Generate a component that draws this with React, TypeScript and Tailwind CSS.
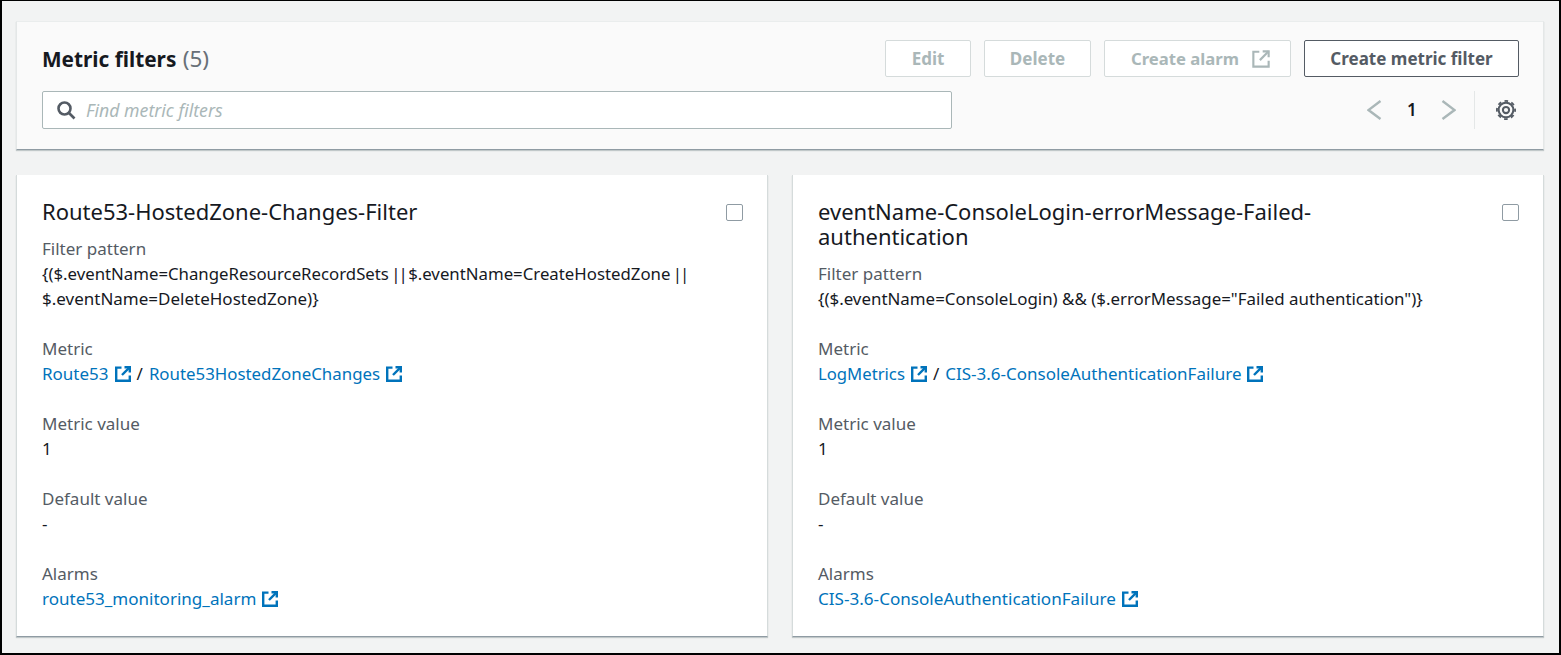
const font = "[font-family:'Noto_Sans','Open_Sans',sans-serif]";

function ExtIcon({ color = "#0073bb", size = 16, sw = 2.4 }: { color?: string; size?: number; sw?: number }) {
  return (
    <svg width={size} height={size} viewBox="0 0 16 16" fill="none" stroke={color} strokeWidth={sw} className="shrink-0">
      <path d="M6.5 1.6H1.2v13.2h13.6V9.5" />
      <path d="M9.5 1.2h5.3v5.3" />
      <path d="M14.8 1.2 7 9" />
    </svg>
  );
}

function Link({ text, cls = "" }: { text: string; cls?: string }) {
  return (
    <span className={`inline-flex items-center gap-[6px] text-[#0073bb] whitespace-nowrap ${cls}`}>
      {text}
      <ExtIcon />
    </span>
  );
}

function Field({ label, children }: { label: string; children: React.ReactNode }) {
  return (
    <div>
      <div className="text-[#545b64]">{label}</div>
      <div className="text-[#16191f]">{children}</div>
    </div>
  );
}

function Card({ title, pattern, metric, alarm }: { title: React.ReactNode; pattern: React.ReactNode; metric: React.ReactNode; alarm: React.ReactNode }) {
  return (
    <div className="bg-white flex-1 min-w-0 pt-[24px] pb-[25px] pl-[25px] pr-[24px] border-b border-b-[#8f9ba3] border-x border-x-[#d5dbdb] shadow-[0_1px_1px_rgba(0,28,36,0.2)]">
      <div className="flex justify-between items-start">
        <div className="text-[22px] text-[#16191f] leading-[25px]">{title}</div>
        <div className="w-[17px] h-[17px] mt-[5px] border border-[#8f9ba3] rounded-[2px] bg-white shrink-0"></div>
      </div>
      <div className="mt-[12px]">
        <Field label="Filter pattern"><span className="text-[16.9px]">{pattern}</span></Field>
        <div className="mt-[25px] flex flex-col gap-[25px]">
          <Field label="Metric">
            <span className="flex items-center">{metric}</span>
          </Field>
          <Field label="Metric value">1</Field>
          <Field label="Default value">-</Field>
          <Field label="Alarms">{alarm}</Field>
        </div>
      </div>
    </div>
  );
}

function Btn({ children, w }: { children: React.ReactNode; w: string }) {
  return (
    <div className={`${w} h-[37px] border border-[#d5dbdb] rounded-[2px] bg-white text-[#aab7b8] font-bold flex items-center justify-center`}>
      {children}
    </div>
  );
}

export default function App() {
  return (
    <div className={`${font} w-[1561px] h-[655px] bg-[#f2f3f3] border-2 border-black border-t-[1px] text-[17px] leading-[25px] px-[14px] pt-[20px] overflow-hidden`}>
      <div className="bg-[#fafafa] h-[129px] w-[1528px] border-x border-[#e4e7e7] border-t border-t-[#eaeded] border-b border-b-[#8f9ba3] shadow-[0_1px_1px_rgba(0,28,36,0.2)] pl-[25px] pr-[24px] pt-[18px]">
        <div className="flex justify-between items-center h-[37px]">
          <div className="text-[20.8px] font-bold text-[#16191f]">
            Metric filters <span className="ml-[1px] font-normal text-[22.5px] text-[#687078]">(5)</span>
          </div>
          <div className="flex gap-[13px]">
            <Btn w="w-[86px]">Edit</Btn>
            <Btn w="w-[107px]">Delete</Btn>
            <div className="w-[187px] h-[37px] border border-[#d5dbdb] rounded-[2px] bg-white text-[#aab7b8] text-[16.7px] font-bold flex items-center justify-end gap-[13px] pr-[20px]">
              Create alarm <ExtIcon color="#aab7b8" size={18} sw={1.9} />
            </div>
            <div className="w-[215px] h-[37px] border border-[#545b64] rounded-[2px] bg-white text-[#545b64] font-bold flex items-center justify-center">Create metric filter</div>
          </div>
        </div>
        <div className="flex justify-between items-center mt-[14px]">
          <div className="w-[910px] h-[38px] border border-[#aab7b8] rounded-[2px] bg-white flex items-center pl-[13px]">
            <svg width="20" height="20" viewBox="0 0 20 20" fill="none" stroke="#545b64" strokeWidth="2.6">
              <circle cx="8.5" cy="8.5" r="6" />
              <path d="m13 13 5.5 5.5" />
            </svg>
            <span className="ml-[10px] italic text-[17.7px] text-[#aab7b8]">Find metric filters</span>
          </div>
          <div className="flex items-center mr-[2px] -mt-[1px]">
            <svg width="15" height="24" viewBox="0 0 15 24" fill="none" stroke="#aab7b8" strokeWidth="2.4"><path d="M13.5 3 1.5 12l12 9" /></svg>
            <span className="mx-[25px] w-[9px] text-center text-[#16191f] font-semibold -mt-[1px]">1</span>
            <svg width="15" height="24" viewBox="0 0 15 24" fill="none" stroke="#aab7b8" strokeWidth="2.4"><path d="m1.5 3 12 9-12 9" /></svg>
            <div className="w-px h-[38px] bg-[#e4e7e7] ml-[18px] mr-[20px]"></div>
            <svg width="22" height="22" viewBox="0 0 24 24" fill="none" stroke="#545b64">
              <circle cx="12" cy="12" r="8" strokeWidth="2.2" />
              <circle cx="12" cy="12" r="9.9" strokeWidth="2" strokeDasharray="4 3.78" strokeDashoffset="2" />
              <circle cx="12" cy="12" r="3.4" strokeWidth="2.2" />
            </svg>
          </div>
        </div>
      </div>
      <div className="flex gap-[24px] w-[1528px] mt-[25px]">
        <Card
          title="Route53-HostedZone-Changes-Filter"
          pattern={<><span className="text-[16.8px]">{"{($.eventName=ChangeResourceRecordSets"}<span className="tracking-[-2px]">{" || "}</span>{"$.eventName=CreateHostedZone"}<span className="tracking-[-2px]">{" ||"}</span></span><br /><span className="text-[17px]">{"$.eventName=DeleteHostedZone)}"}</span></>}
          metric={<>
            <Link text="Route53" />
            <span className="mx-[6px]">/</span>
            <Link text="Route53HostedZoneChanges" cls="text-[16.85px]" />
          </>}
          alarm={<Link text="route53_monitoring_alarm" cls="text-[17.05px]" />}
        />
        <Card
          title={<>eventName-ConsoleLogin-errorMessage-Failed-<br />authentication</>}
          pattern={'{($.eventName=ConsoleLogin) && ($.errorMessage="Failed authentication")}'}
          metric={<>
            <Link text="LogMetrics" cls="text-[16.7px]" />
            <span className="mx-[6px]">/</span>
            <Link text="CIS-3.6-ConsoleAuthenticationFailure" />
          </>}
          alarm={<Link text="CIS-3.6-ConsoleAuthenticationFailure" cls="text-[17.1px]" />}
        />
      </div>
    </div>
  );
}
